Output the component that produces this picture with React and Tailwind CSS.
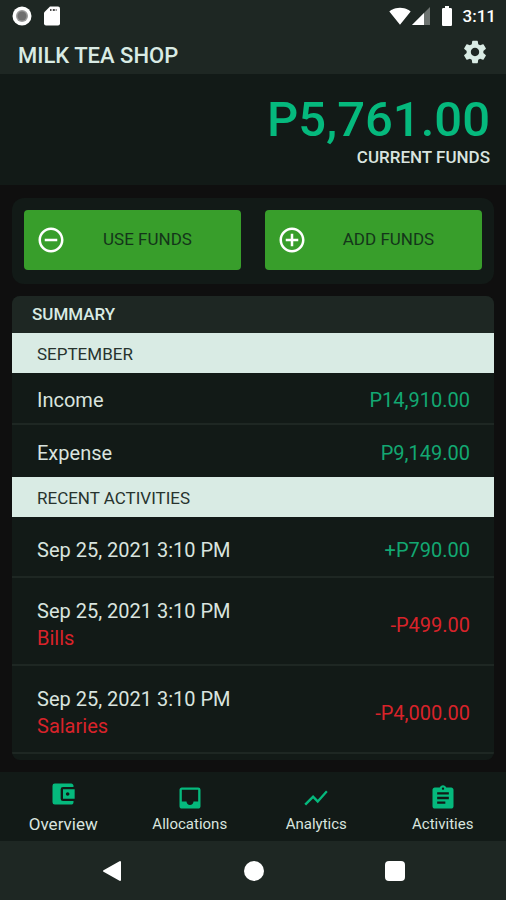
import {
  MdAccountBalanceWallet,
  MdAddCircleOutline,
  MdAssignment,
  MdBatteryFull,
  MdInbox,
  MdRemoveCircleOutline,
  MdSettings,
  MdShowChart,
  MdSignalWifi4Bar,
} from "react-icons/md";

const totals = [
  { label: "Income", amount: "P14,910.00" },
  { label: "Expense", amount: "P9,149.00" },
];

const activities = [
  { id: 1, date: "Sep 25, 2021 3:10 PM", amount: "+P790.00" },
  { id: 2, date: "Sep 25, 2021 3:10 PM", category: "Bills", amount: "-P499.00" },
  { id: 3, date: "Sep 25, 2021 3:10 PM", category: "Salaries", amount: "-P4,000.00" },
];

const tabs = [
  { label: "Overview", icon: MdAccountBalanceWallet, active: true },
  { label: "Allocations", icon: MdInbox },
  { label: "Analytics", icon: MdShowChart },
  { label: "Activities", icon: MdAssignment },
];

const StatusBar = () => (
  <div className="flex items-center justify-between h-8 pl-3 pr-2.5 text-white">
    <div className="flex items-center gap-3">
      <svg viewBox="0 0 20 20" className="w-5 h-5">
        <circle cx="10" cy="10" r="9.5" fill="#fff" />
        <circle cx="10" cy="10" r="6" fill="#9a9a9a" />
        <circle cx="10" cy="10" r="4.5" fill="#6f6f6f" />
      </svg>
      <svg viewBox="0 0 16 20" className="w-4 h-5">
        <path d="M6 .5h8a2 2 0 0 1 2 2v15a2 2 0 0 1-2 2H2a2 2 0 0 1-2-2V6.500z" fill="#fff" />
        <path d="M6 3h1.500v2H6zM8.800 3h2v2h-2z" fill="#4b4b4b" />
        <path d="M11.500 3h1.500v2h-1.500z" fill="#9a9a9a" />
      </svg>
    </div>
    <div className="flex items-center">
      <MdSignalWifi4Bar className="w-[22px] h-[22px]" />
      <svg viewBox="0 0 20 20" className="w-5 h-5">
        <path d="M19 1v18H1z" fill="#6d7370" />
        <path d="M13 7v12H1z" fill="#fff" />
      </svg>
      <MdBatteryFull className="w-6 h-6 ml-1" />
      <span className="ml-1 text-[17px] leading-6 font-medium">3:11</span>
    </div>
  </div>
);

const Header = () => (
  <header className="bg-[#1e2723]">
    <StatusBar />
    <div className="flex items-start justify-between h-[42px] pl-[18px] pr-[17px]">
      <h1 className="pt-2.5 text-[22px] leading-7 font-medium text-[#d9ebe4]">
        MILK TEA SHOP
      </h1>
      <button aria-label="Settings" className="pt-1.5 text-[#d9ebe4]">
        <MdSettings className="w-7 h-7" />
      </button>
    </div>
  </header>
);

const ActionButton = ({ icon: Icon, label }) => (
  <button className="flex flex-1 items-center h-[60px] px-3 rounded bg-[#389e2b]">
    <Icon className="w-[30px] h-[30px] text-white" />
    <span className="flex-1 text-center text-[17px] text-[#14351a]">{label}</span>
  </button>
);

const SectionTitle = ({ children }) => (
  <h3 className="pl-[25px] pr-6 h-10 text-[17px] leading-[42px] text-[#27332e] bg-[#d9ebe4]">
    {children}
  </h3>
);

const amountColor = (amount) =>
  amount.startsWith("-") ? "text-[#d8232a]" : "text-[#12a872]";

const Summary = () => (
  <section className="mx-3 mt-3 overflow-hidden rounded-lg bg-[#121a17]">
    <h2 className="px-5 h-[37px] text-[17px] leading-[37px] font-medium text-[#d9ebe4] bg-[#1e2723]">
      SUMMARY
    </h2>
    <SectionTitle>SEPTEMBER</SectionTitle>
    <ul className="divide-y-2 divide-[#1e2723]">
      {totals.map(({ label, amount }) => (
        <li key={label} className="flex items-center justify-between h-[52px] pt-1 pl-[25px] pr-6">
          <span>{label}</span>
          <span className="text-[#12a872]">{amount}</span>
        </li>
      ))}
    </ul>
    <SectionTitle>RECENT ACTIVITIES</SectionTitle>
    <ul className="pb-1.5">
      {activities.map(({ id, date, category, amount }) => (
        <li
          key={id}
          className="flex items-center justify-between pl-[25px] pr-6 pt-5 pb-3 border-b-2 border-[#1e2723]"
        >
          <div className="leading-[27px]">
            <p>{date}</p>
            {category && <p className="text-[#d8232a]">{category}</p>}
          </div>
          <span className={`leading-[27px] ${amountColor(amount)}`}>{amount}</span>
        </li>
      ))}
    </ul>
  </section>
);

const TabBar = () => (
  <nav className="flex h-[69px] bg-[#121a17]">
    {tabs.map(({ label, icon: Icon, active }) => (
      <a
        key={label}
        href={`#${label.toLowerCase()}`}
        className={`flex flex-1 flex-col items-center ${active ? "pt-2" : "pt-3"}`}
      >
        <Icon className="w-7 h-7 text-[#05b97d]" />
        <span className={`leading-6 ${active ? "mt-1 text-[17px]" : "text-[15px]"}`}>
          {label}
        </span>
      </a>
    ))}
  </nav>
);

const SystemBar = () => (
  <div className="flex items-center justify-around h-[59px] px-10 bg-[#1e2723] text-white">
    <button aria-label="Back">
      <svg viewBox="0 0 22 22" className="w-[22px] h-[22px]">
        <path d="M19 2v18L3 11z" fill="currentColor" stroke="currentColor" strokeWidth="2" strokeLinejoin="round" />
      </svg>
    </button>
    <button aria-label="Home" className="w-5 h-5 rounded-full bg-white" />
    <button aria-label="Recent apps" className="w-5 h-5 rounded-sm bg-white" />
  </div>
);

const App = () => {
  return (
    <div className="flex flex-col min-h-screen bg-[#0f0f0f] font-[Roboto,sans-serif] text-xl text-[#d9e4df]">
      <Header />

      {/* Balance */}
      <section className="px-4 pt-[18px] pb-[17px] text-right font-medium bg-[#121a17]">
        <p className="text-[49px] leading-[55px] text-[#05b97d]">P5,761.00</p>
        <p className="text-[17px] leading-[21px]">CURRENT FUNDS</p>
      </section>

      {/* Actions */}
      <section className="flex gap-6 mx-3 mt-[13px] p-3 pb-[14px] rounded-xl bg-[#121a17]">
        <ActionButton icon={MdRemoveCircleOutline} label="USE FUNDS" />
        <ActionButton icon={MdAddCircleOutline} label="ADD FUNDS" />
      </section>

      <Summary />

      <footer className="mt-auto pt-3">
        <TabBar />
        <SystemBar />
      </footer>
    </div>
  );
};

export default App;
